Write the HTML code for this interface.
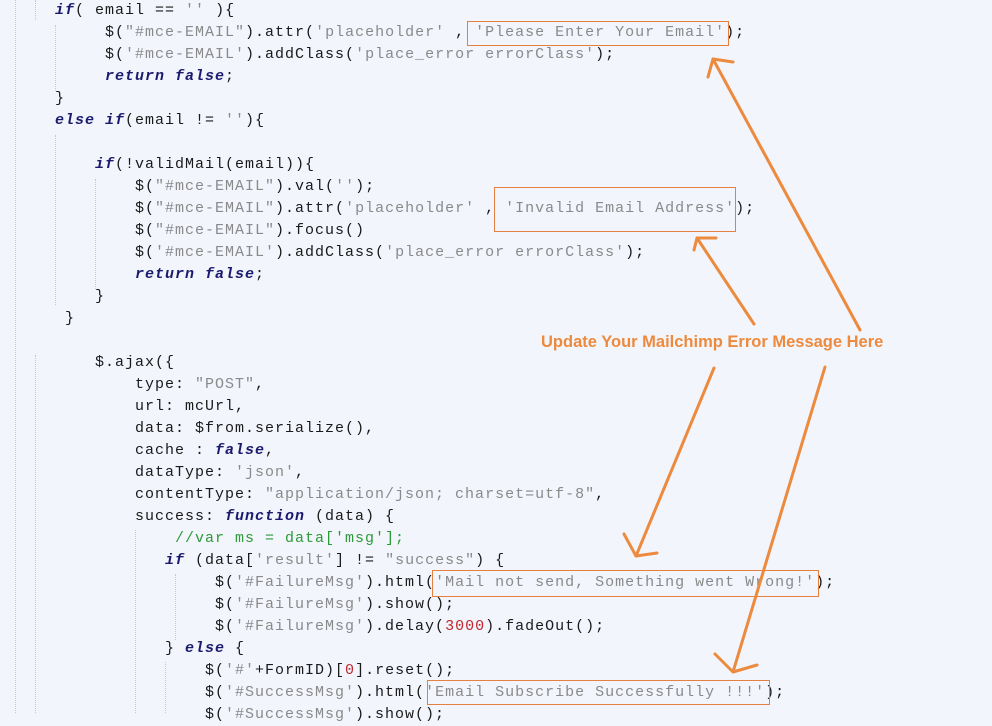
<!DOCTYPE html>
<html><head><meta charset="utf-8"><style>
html,body{margin:0;padding:0;}
body{width:992px;height:713px;overflow:hidden;background:#f3f5fc;position:relative;font-family:"Liberation Mono",monospace;}
.l{position:absolute;white-space:pre;font-size:15px;letter-spacing:1px;color:#1a1a1a;line-height:22px;height:22px;}
.k{color:#1b1b6e;font-style:italic;font-weight:bold;}
.s{color:#8a8a8a;}
.c{color:#2e9a3a;}
.n{color:#c0282e;}
.g{position:absolute;width:0;border-left:1px dotted #c8c8c8;}
.b{position:absolute;border:1px solid #e5803f;box-sizing:border-box;}
.t{position:absolute;left:541px;top:333px;font-family:"Liberation Sans",sans-serif;font-weight:bold;font-size:16.5px;color:#ec8a3e;white-space:nowrap;}
</style></head><body>
<div class="g" style="left:15px;top:0;height:713px"></div>
<div class="g" style="left:55px;top:25px;height:66px"></div>
<div class="g" style="left:55px;top:135px;height:170px"></div>
<div class="g" style="left:95px;top:179px;height:110px"></div>
<div class="g" style="left:35px;top:355px;height:358px"></div>
<div class="g" style="left:35px;top:0;height:20px"></div>
<div class="g" style="left:135px;top:530px;height:183px"></div>
<div class="g" style="left:175px;top:574px;height:66px"></div>
<div class="g" style="left:165px;top:662px;height:51px"></div>

<div class="l" style="left:55px;top:0px"><span class="k">if</span>( email == <span class="s">''</span> ){</div>
<div class="l" style="left:105px;top:22px">$(<span class="s">"#mce-EMAIL"</span>).attr(<span class="s">'placeholder'</span> , <span class="s">'Please Enter Your Email'</span>);</div>
<div class="l" style="left:105px;top:44px">$(<span class="s">'#mce-EMAIL'</span>).addClass(<span class="s">'place_error errorClass'</span>);</div>
<div class="l" style="left:105px;top:66px"><span class="k">return false</span>;</div>
<div class="l" style="left:55px;top:88px">}</div>
<div class="l" style="left:55px;top:110px"><span class="k">else if</span>(email != <span class="s">''</span>){</div>
<div class="l" style="left:95px;top:154px"><span class="k">if</span>(!validMail(email)){</div>
<div class="l" style="left:135px;top:176px">$(<span class="s">"#mce-EMAIL"</span>).val(<span class="s">''</span>);</div>
<div class="l" style="left:135px;top:198px">$(<span class="s">"#mce-EMAIL"</span>).attr(<span class="s">'placeholder'</span> , <span class="s">'Invalid Email Address'</span>);</div>
<div class="l" style="left:135px;top:220px">$(<span class="s">"#mce-EMAIL"</span>).focus()</div>
<div class="l" style="left:135px;top:242px">$(<span class="s">'#mce-EMAIL'</span>).addClass(<span class="s">'place_error errorClass'</span>);</div>
<div class="l" style="left:135px;top:264px"><span class="k">return false</span>;</div>
<div class="l" style="left:95px;top:286px">}</div>
<div class="l" style="left:65px;top:308px">}</div>
<div class="l" style="left:95px;top:352px">$.ajax({</div>
<div class="l" style="left:135px;top:374px">type: <span class="s">"POST"</span>,</div>
<div class="l" style="left:135px;top:396px">url: mcUrl,</div>
<div class="l" style="left:135px;top:418px">data: $from.serialize(),</div>
<div class="l" style="left:135px;top:440px">cache : <span class="k">false</span>,</div>
<div class="l" style="left:135px;top:462px">dataType: <span class="s">'json'</span>,</div>
<div class="l" style="left:135px;top:484px">contentType: <span class="s">"application/json; charset=utf-8"</span>,</div>
<div class="l" style="left:135px;top:506px">success: <span class="k">function</span> (data) {</div>
<div class="l c" style="left:175px;top:528px">//var ms = data['msg'];</div>
<div class="l" style="left:165px;top:550px"><span class="k">if</span> (data[<span class="s">'result'</span>] != <span class="s">"success"</span>) {</div>
<div class="l" style="left:215px;top:572px">$(<span class="s">'#FailureMsg'</span>).html(<span class="s">'Mail not send, Something went Wrong!'</span>);</div>
<div class="l" style="left:215px;top:594px">$(<span class="s">'#FailureMsg'</span>).show();</div>
<div class="l" style="left:215px;top:616px">$(<span class="s">'#FailureMsg'</span>).delay(<span class="n">3000</span>).fadeOut();</div>
<div class="l" style="left:165px;top:638px">} <span class="k">else</span> {</div>
<div class="l" style="left:205px;top:660px">$(<span class="s">'#'</span>+FormID)[<span class="n">0</span>].reset();</div>
<div class="l" style="left:205px;top:682px">$(<span class="s">'#SuccessMsg'</span>).html(<span class="s">'Email Subscribe Successfully !!!'</span>);</div>
<div class="l" style="left:205px;top:704px">$(<span class="s">'#SuccessMsg'</span>).show();</div>

<div class="b" style="left:467px;top:21px;width:262px;height:25px"></div>
<div class="b" style="left:494px;top:187px;width:242px;height:45px"></div>
<div class="b" style="left:432px;top:570px;width:387px;height:27px"></div>
<div class="b" style="left:427px;top:680px;width:343px;height:25px"></div>

<div class="t">Update Your Mailchimp Error Message Here</div>

<svg width="992" height="713" style="position:absolute;left:0;top:0" fill="none" stroke="#ec8a3e" stroke-width="3" stroke-linecap="round" stroke-linejoin="round">
<line x1="860" y1="330" x2="713" y2="59"/><polyline points="708,77 713,59 733,62"/>
<line x1="754" y1="324" x2="697" y2="238"/><polyline points="694,250 697,238 716,238"/>
<line x1="714" y1="368" x2="636" y2="556"/><polyline points="624,534 636,556 657,553"/>
<line x1="825" y1="367" x2="733" y2="672"/><polyline points="715,654 733,672 757,665"/>
</svg>
</body></html>
